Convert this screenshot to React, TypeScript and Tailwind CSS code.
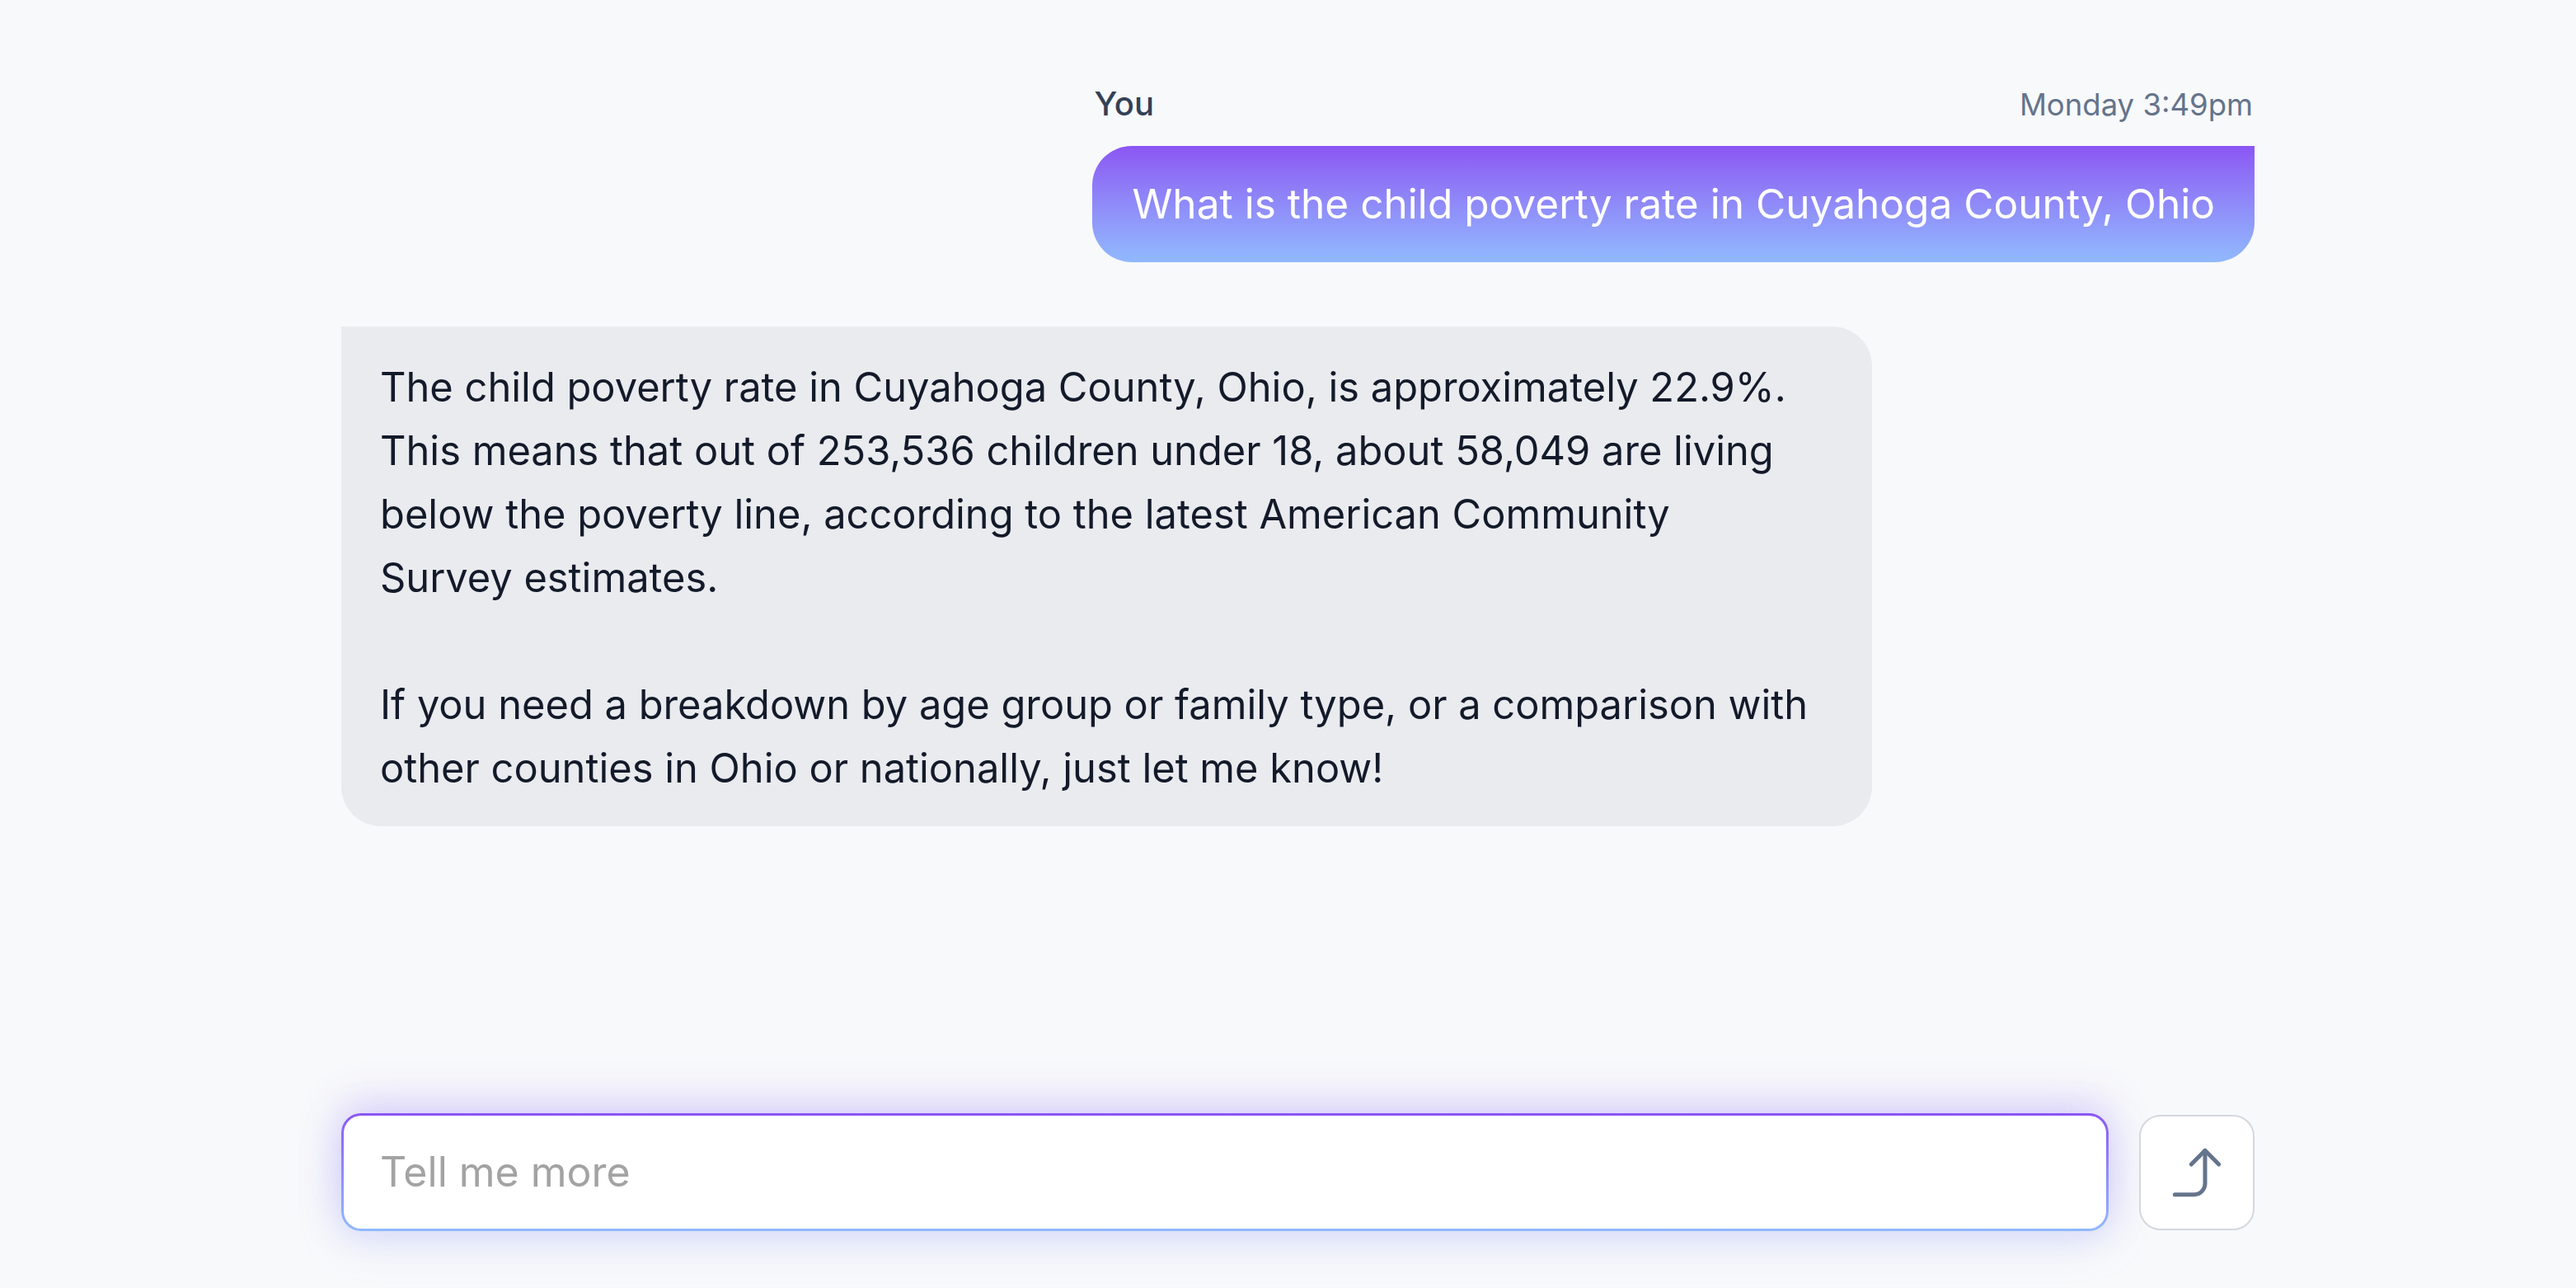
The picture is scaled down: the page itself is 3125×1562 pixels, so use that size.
import React from "react";
import { CornerRightUp } from "lucide-react";

const lines1 = [
  "The child poverty rate in Cuyahoga County, Ohio, is approximately 22.9%.",
  "This means that out of 253,536 children under 18, about 58,049 are living",
  "below the poverty line, according to the latest American Community",
  "Survey estimates.",
];
const lines2 = [
  "If you need a breakdown by age group or family type, or a comparison with",
  "other counties in Ohio or nationally, just let me know!",
];

export default function App() {
  return (
    <div
      className="h-screen w-full bg-[#f8f9fb] flex flex-col pl-[414px] pr-[390px] pt-[98px] pb-[69px]"
      style={{ fontFamily: "Inter, 'Noto Sans', sans-serif" }}
    >
      <div className="flex-1 flex flex-col">
        {/* user message */}
        <div className="ml-auto w-fit flex flex-col">
          <div className="flex items-baseline justify-between px-[2px] mb-[22px]">
            <span className="text-[40px] leading-[56px] font-medium text-[#334155]">You</span>
            <span className="text-[36.5px] leading-[56px] text-[#64748b]">Monday 3:49pm</span>
          </div>
          <div className="rounded-[48px] rounded-tr-none bg-gradient-to-b from-[#8b55f3] to-[#90b9fd] px-[48px] py-[32px]">
            <p className="text-[49.6px] leading-[77px] text-white whitespace-nowrap">
              What is the child poverty rate in Cuyahoga County, Ohio
            </p>
          </div>
        </div>

        {/* assistant message */}
        <div className="mt-[78px] w-[1857px] rounded-[48px] rounded-tl-none bg-[#eaebef] px-[47px] pt-[35px] pb-[32px]">
          <div className="text-[48.8px] leading-[77px] text-[#131a2a]">
            {lines1.map((l) => (
              <div key={l} className="whitespace-nowrap">{l}</div>
            ))}
            <div className="h-[77px]" />
            {lines2.map((l) => (
              <div key={l} className="whitespace-nowrap">{l}</div>
            ))}
          </div>
        </div>
      </div>

      {/* input row */}
      <div className="flex items-center gap-[37px]">
        <div className="flex-1 rounded-[24px] p-[3px] bg-gradient-to-b from-[#8b55f3] to-[#90b9fd] shadow-[0_-12px_50px_rgba(139,92,246,0.25),0_12px_50px_rgba(147,180,253,0.25)]">
          <div className="h-[137px] rounded-[21px] bg-white flex items-center px-[44px]">
            <input
              className="w-full bg-transparent outline-none text-[50px] text-[#131a2a] placeholder:text-[#a3a3a3]"
              placeholder="Tell me more"
            />
          </div>
        </div>
        <button className="w-[140px] h-[140px] shrink-0 rounded-[26px] border-2 border-[#d4d8df] bg-white flex items-center justify-center">
          <CornerRightUp size={80} strokeWidth={1.5} color="#64748b" />
        </button>
      </div>
    </div>
  );
}
